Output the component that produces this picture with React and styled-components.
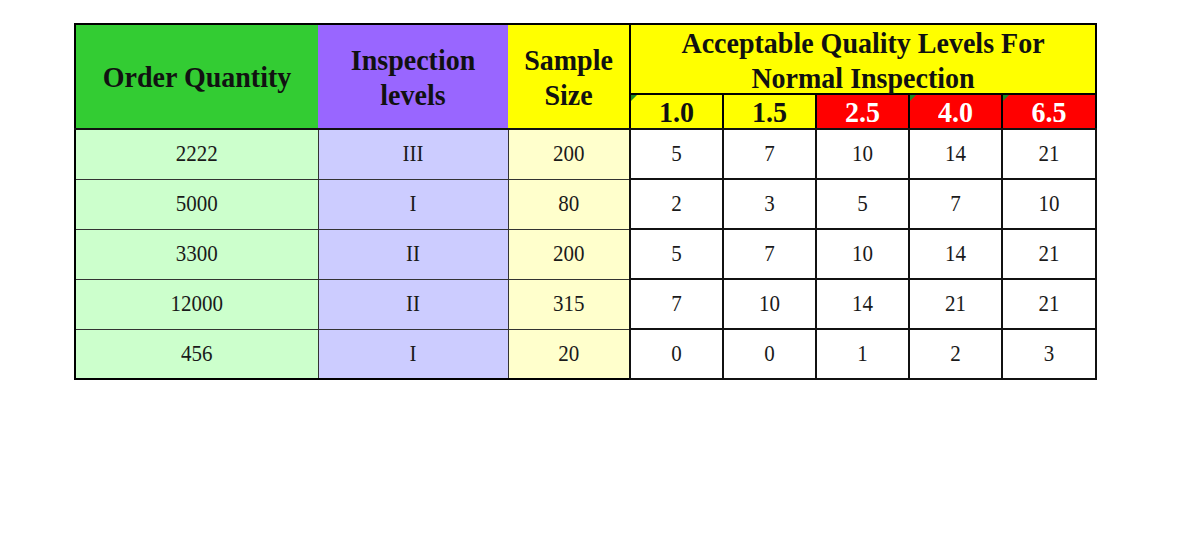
import React from "react";
import styled, { createGlobalStyle } from "styled-components";

const GlobalStyle = createGlobalStyle`
  html, body {
    margin: 0;
    padding: 0;
    background: #fff;
  }
`;

const columns = [243, 190, 122, 93, 93, 93, 93, 94];

const aqlLevels = [
  { label: "1.0", tone: "yellow", flag: true },
  { label: "1.5", tone: "yellow", flag: false },
  { label: "2.5", tone: "red", flag: false },
  { label: "4.0", tone: "red", flag: true },
  { label: "6.5", tone: "red", flag: true },
];

const rows = [
  { qty: "2222", level: "III", size: "200", values: [5, 7, 10, 14, 21] },
  { qty: "5000", level: "I", size: "80", values: [2, 3, 5, 7, 10] },
  { qty: "3300", level: "II", size: "200", values: [5, 7, 10, 14, 21] },
  { qty: "12000", level: "II", size: "315", values: [7, 10, 14, 21, 21] },
  { qty: "456", level: "I", size: "20", values: [0, 0, 1, 2, 3] },
];

const headTones = {
  green: "#33cc33",
  purple: "#9966ff",
  yellow: "#ffff00",
  red: "#ff0000",
};

const bodyTones = {
  green: "#ccffcc",
  purple: "#ccccff",
  yellow: "#ffffcc",
  white: "#ffffff",
};

export default function App() {
  return (
    <Page>
      <GlobalStyle />
      <Table>
        <colgroup>
          {columns.map((w, i) => (
            <col key={i} style={{ width: w }} />
          ))}
        </colgroup>
        <thead>
          <tr>
            <HeadCell rowSpan={2} $tone="green">
              <Tall>Order Quantity</Tall>
            </HeadCell>
            <HeadCell rowSpan={2} $tone="purple">
              <Tall>
                Inspection
                <br />
                levels
              </Tall>
            </HeadCell>
            <HeadCell rowSpan={2} $tone="yellow" $edge>
              <Tall>
                Sample
                <br />
                Size
              </Tall>
            </HeadCell>
            <TitleCell colSpan={5}>
              <Tall>
                Acceptable Quality Levels For
                <br />
                Normal Inspection
              </Tall>
            </TitleCell>
          </tr>
          <tr>
            {aqlLevels.map((l) => (
              <LevelCell key={l.label} $tone={l.tone}>
                {l.flag && <Flag />}
                <Tall>{l.label}</Tall>
              </LevelCell>
            ))}
          </tr>
        </thead>
        <tbody>
          {rows.map((r, i) => (
            <tr key={i}>
              <Cell $tone="green">
                <Tall>{r.qty}</Tall>
              </Cell>
              <Cell $tone="purple">
                <Tall>{r.level}</Tall>
              </Cell>
              <Cell $tone="yellow">
                <Tall>{r.size}</Tall>
              </Cell>
              {r.values.map((v, j) => (
                <Cell key={j} $tone="white" $strong>
                  <Tall>{v}</Tall>
                </Cell>
              ))}
            </tr>
          ))}
        </tbody>
      </Table>
    </Page>
  );
}

const Page = styled.div`
  padding: 23px 0 0 74px;
  height: 557px;
  box-sizing: border-box;
  font-family: "Liberation Serif", "Times New Roman", serif;
`;

const Table = styled.table`
  border-collapse: collapse;
  table-layout: fixed;
  width: 1021px;
  border: 2px solid #000;
`;

/* the source glyphs are a little stretched vertically */
const Tall = styled.span`
  display: inline-block;
  transform: scaleY(1.07);
`;

const HeadCell = styled.th`
  background: ${(p) => headTones[p.$tone]};
  color: #111;
  font-size: 28px;
  font-weight: bold;
  line-height: 33px;
  padding: 0;
  text-align: center;
  vertical-align: middle;
  border: none;
  border-right: ${(p) => (p.$edge ? "2px solid #000" : "none")};
  border-bottom: 2px solid #111;
`;

const TitleCell = styled.th`
  background: ${headTones.yellow};
  color: #111;
  font-size: 28px;
  font-weight: bold;
  line-height: 33px;
  height: 66px;
  padding: 2px 0 0;
  text-align: center;
  vertical-align: middle;
  border-bottom: 2px solid #000;
`;

const LevelCell = styled.th`
  position: relative;
  background: ${(p) => headTones[p.$tone]};
  color: ${(p) => (p.$tone === "red" ? "#fff" : "#111")};
  font-size: 28px;
  font-weight: bold;
  line-height: 33px;
  height: 33px;
  padding: 0;
  text-align: center;
  border-left: 2px solid #000;
  border-bottom: 2px solid #111;
`;

const Flag = styled.span`
  position: absolute;
  top: 0;
  left: 0;
  width: 0;
  height: 0;
  border-top: 6px solid #1f8a1f;
  border-right: 6px solid transparent;
`;

const Cell = styled.td`
  background: ${(p) => bodyTones[p.$tone]};
  color: #1a1a1a;
  font-size: 21px;
  height: 47px;
  padding: 1px 0 0;
  text-align: center;
  vertical-align: middle;
  border: ${(p) => (p.$strong ? "2px solid #111" : "1px solid #333")};
`;
